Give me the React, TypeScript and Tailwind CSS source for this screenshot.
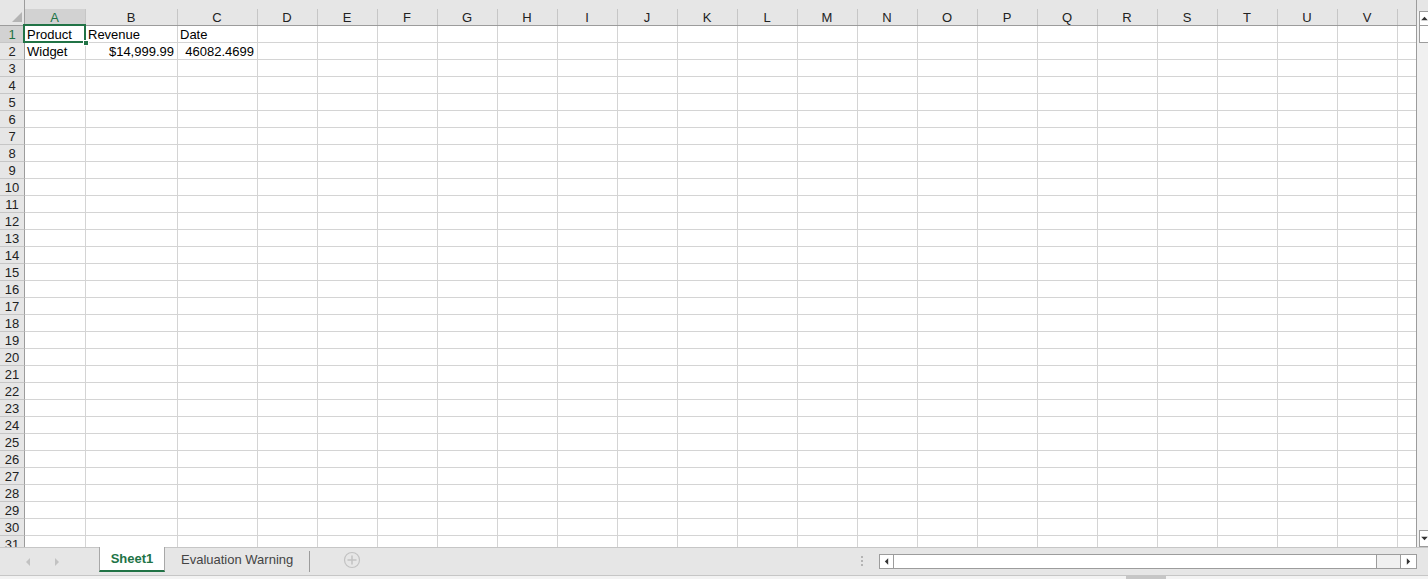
import React from 'react';

// ---------------------------------------------------------------------------
// Sheet data
// ---------------------------------------------------------------------------

interface Col {
  label: string;
  w: string;
}

const COLS: Col[] = [
  { label: 'A', w: 'w-[61px]' },
  { label: 'B', w: 'w-[92px]' },
  { label: 'C', w: 'w-[80px]' },
  ...'DEFGHIJKLMNOPQRSTUV'.split('').map((l) => ({ label: l, w: 'w-[60px]' })),
];

type Cell = { text: string; right?: boolean };

const DATA: Record<number, Record<string, Cell>> = {
  1: { A: { text: 'Product' }, B: { text: 'Revenue' }, C: { text: 'Date' } },
  2: {
    A: { text: 'Widget' },
    B: { text: '$14,999.99', right: true },
    C: { text: '46082.4699', right: true },
  },
};

const ROWS = Array.from({ length: 31 }, (_, i) => i + 1);

// ---------------------------------------------------------------------------
// Small drawings
// ---------------------------------------------------------------------------

function Tri({ dir, className }: { dir: 'l' | 'r' | 'u' | 'd'; className?: string }) {
  const pts = {
    l: '5,0 5,8 1,4',
    r: '1,0 1,8 5,4',
    u: '0,5 8,5 4,1',
    d: '0,1 8,1 4,5',
  }[dir];
  const box = dir === 'l' || dir === 'r' ? '0 0 6 8' : '0 0 8 6';
  return (
    <svg viewBox={box} className={className} fill="currentColor">
      <polygon points={pts} />
    </svg>
  );
}

// ---------------------------------------------------------------------------
// Grid
// ---------------------------------------------------------------------------

function HeaderRow() {
  return (
    <div className="flex h-[26px] shrink-0 border-b border-[#9c9c9c]">
      <div className="relative w-[25px] shrink-0 border-r border-[#9c9c9c]">
        <svg viewBox="0 0 10 10" className="absolute left-[12px] top-[12px] h-[10px] w-[10px] text-[#b4b4b4]" fill="currentColor">
          <polygon points="10,0 10,10 0,10" />
        </svg>
      </div>
      {COLS.map((c) => (
        <div key={c.label} className={`${c.w} shrink-0 flex flex-col`}>
          <div className="h-[9px]" />
          <div
            className={
              c.label === 'A'
                ? 'h-[16px] flex items-center justify-center pt-[2px] pr-[1px] border-r border-[#c6c6c6] bg-[#d2d2d2] text-[#217346]'
                : 'h-[16px] flex items-center justify-center pt-[2px] pr-[1px] border-r border-[#c6c6c6] text-[#222]'
            }
          >
            {c.label}
          </div>
        </div>
      ))}
      <div className="flex-1" />
    </div>
  );
}

function BodyRow({ n }: { n: number }) {
  const row = DATA[n] ?? {};
  return (
    <div className="flex h-[17px] shrink-0">
      <div
        className={
          n === 1
            ? 'w-[25px] shrink-0 flex items-center justify-center pt-[1px] border-r border-b border-r-[#9c9c9c] border-b-[#c6c6c6] bg-[#d2d2d2] text-[#217346]'
            : 'w-[25px] shrink-0 flex items-center justify-center pt-[1px] border-r border-b border-r-[#9c9c9c] border-b-[#c6c6c6] bg-[#e6e6e6] text-[#222]'
        }
      >
        {n}
      </div>
      {COLS.map((c) => {
        const cell = row[c.label];
        const sel = n === 1 && c.label === 'A';
        return (
          <div
            key={c.label}
            className={`${c.w} relative shrink-0 border-r border-b border-[#d4d4d4] bg-white pt-[1px] leading-[15px] whitespace-nowrap text-black ${
              cell?.right ? 'text-right pr-[3px]' : 'pl-[2px]'
            }`}
          >
            {cell?.text}
            {sel && (
              <>
                <div className="absolute -left-[2px] -top-[2px] -right-[1px] -bottom-[1px] border-2 border-[#217346] z-10" />
                <div className="absolute -right-[4px] -bottom-[4px] h-[6px] w-[6px] bg-[#217346] border border-white z-20" />
              </>
            )}
          </div>
        );
      })}
      <div className="flex-1 border-b border-[#d4d4d4] bg-white" />
    </div>
  );
}

function VScroll() {
  return (
    <div className="w-[11px] shrink-0 pl-[2px] flex flex-col bg-[#f0f0f0]">
      <div className="h-[11px] bg-[#e6e6e6] -ml-[2px]" />
      <div className="h-[15px] border border-[#9c9c9c] border-r-0 bg-white flex items-center justify-center">
        <Tri dir="u" className="h-[5px] w-[7px] text-[#333]" />
      </div>
      <div className="h-[17px] border border-t-0 border-r-0 border-[#9c9c9c] bg-white" />
      <div className="flex-1" />
      <div className="h-[17px] border border-r-0 border-[#9c9c9c] bg-white flex items-center justify-center">
        <Tri dir="d" className="h-[5px] w-[7px] text-[#333]" />
      </div>
    </div>
  );
}

// ---------------------------------------------------------------------------
// Bottom bar
// ---------------------------------------------------------------------------

function TabBar() {
  return (
    <div className="flex h-[28px] shrink-0 border-t border-[#c6c6c6] bg-[#e6e6e6]">
      <div className="w-[99px] shrink-0 flex items-center pt-[1px]">
        <Tri dir="l" className="ml-[25px] h-[8px] w-[6px] text-[#c2c2c2]" />
        <Tri dir="r" className="ml-[23px] h-[8px] w-[6px] text-[#c2c2c2]" />
      </div>
      <div className="-mt-[1px] h-[25px] w-[66px] shrink-0 bg-white border-l border-r border-[#a8a8a8] border-b-2 border-b-[#217346] flex items-center justify-center font-bold text-[#217346]">
        Sheet1
      </div>
      <div className="w-[144px] shrink-0 flex items-center pl-[16px] pb-[3px] text-[#444] text-[13px]">
        Evaluation Warning
      </div>
      <div className="mt-[3px] h-[21px] w-[1px] bg-[#9c9c9c]" />
      <div className="ml-[33px] flex items-center pb-[3px]">
        <svg viewBox="0 0 18 18" className="h-[18px] w-[18px]" fill="none" stroke="#c2c2c2" strokeWidth="1.2">
          <circle cx="9" cy="9" r="7.5" />
          <path d="M9 4.5v9M4.5 9h9" strokeWidth="1.5" />
        </svg>
      </div>
      <div className="flex-1" />
      <div className="mt-[8px] flex flex-col gap-[2px]">
        <div className="h-[2px] w-[2px] bg-[#b4b4b4]" />
        <div className="h-[2px] w-[2px] bg-[#b4b4b4]" />
        <div className="h-[2px] w-[2px] bg-[#b4b4b4]" />
      </div>
      <div className="ml-[16px] mr-[11px] mt-[6px] h-[15px] w-[538px] border border-[#9c9c9c] flex bg-[#f0f0f0]">
        <div className="w-[14px] border-r border-[#9c9c9c] bg-white flex items-center justify-center">
          <Tri dir="l" className="h-[7px] w-[5px] text-[#333]" />
        </div>
        <div className="w-[483px] border-r border-[#9c9c9c] bg-white" />
        <div className="flex-1" />
        <div className="w-[16px] border-l border-[#9c9c9c] bg-white flex items-center justify-center">
          <Tri dir="r" className="h-[7px] w-[5px] text-[#333]" />
        </div>
      </div>
    </div>
  );
}

export default function App() {
  return (
    <div className="w-[1428px] h-[579px] overflow-hidden flex flex-col bg-[#e6e6e6] text-[13px] font-['Liberation_Sans',Arial,sans-serif]">
      <div className="flex h-[547px] shrink-0">
        <div className="w-[1417px] shrink-0 flex flex-col overflow-hidden border-r border-[#9c9c9c] bg-[#e6e6e6]">
          <HeaderRow />
          {ROWS.map((n) => (
            <BodyRow key={n} n={n} />
          ))}
        </div>
        <VScroll />
      </div>
      <TabBar />
      <div className="h-[4px] shrink-0 border-t border-[#c6c6c6] bg-[#f3f3f3] flex">
        <div className="ml-[1126px] w-[40px] bg-[#c6c6c6]" />
      </div>
    </div>
  );
}
